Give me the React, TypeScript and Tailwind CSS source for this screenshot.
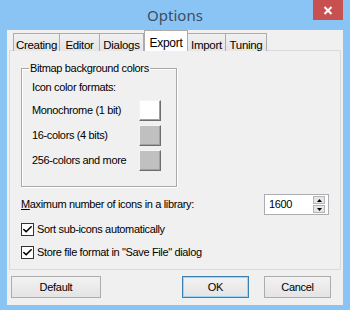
import { Check } from 'lucide-react';

const TABS = [
  { label: 'Creating', w: 'w-[47px]' },
  { label: 'Editor', w: 'w-[41px]' },
  { label: 'Dialogs', w: 'w-[45px]' },
  { label: 'Export', w: 'w-[44px]', active: true },
  { label: 'Import', w: 'w-[39px]' },
  { label: 'Tuning', w: 'w-[42px]' },
];

const FORMATS = [
  { label: 'Monochrome (1 bit)', color: 'bg-white' },
  { label: '16-colors (4 bits)', color: 'bg-[#c0c0c0]' },
  { label: '256-colors and more', color: 'bg-[#c0c0c0]' },
];

function Swatch({ color }: { color: string }) {
  // classic raised 3D colour button
  return (
    <div className={`w-[22px] h-[21px] border border-t-[#f4f4f4] border-l-[#f4f4f4] border-r-[#6d6d6d] border-b-[#6d6d6d] ${color}`}>
      <div className="w-full h-full border-r border-b border-r-[#a0a0a0] border-b-[#a0a0a0]" />
    </div>
  );
}

function CheckBox({ label }: { label: string }) {
  return (
    <div className="flex items-center h-[13px]">
      <div className="w-[13px] h-[13px] bg-white border border-[#333] flex items-center justify-center">
        <Check size={11} strokeWidth={3.5} className="text-black" />
      </div>
      <span className="ml-[3px]">{label}</span>
    </div>
  );
}

function DlgButton({ label, w, focused }: { label: string; w: string; focused?: boolean }) {
  return (
    <button
      className={`${w} h-[22px] border ${focused ? 'border-[#3c7fb1] shadow-[inset_0_0_0_1px_#9fd5f5]' : 'border-[#acacac]'} bg-gradient-to-b from-[#f2f2f2] to-[#e4e4e4] text-black text-[11px] tracking-[-0.3px]`}
    >
      {label}
    </button>
  );
}

export default function App() {
  return (
    <div
      className="w-[350px] h-[310px] bg-[#8ac4f5] flex flex-col text-[11px] tracking-[-0.35px] text-black"
      style={{ fontFamily: '"Liberation Sans", Arial, sans-serif' }}
    >
      {/* Title bar */}
      <div className="relative h-[30px] flex items-start justify-center">
        <span className="mt-[4px] text-[15px] tracking-normal text-[#3e4d5f]" style={{ fontFamily: '"Noto Sans", sans-serif' }}>
          Options
        </span>
        <div className="absolute top-0 right-[7px] w-[30px] h-[20px] bg-[#c75050] flex items-center justify-center">
          <svg width="10" height="9" viewBox="0 0 10 9">
            <path d="M1.5 1 L8.5 8 M8.5 1 L1.5 8" stroke="white" strokeWidth="2" />
          </svg>
        </div>
      </div>

      {/* Client area */}
      <div className="mx-[7px] h-[275px] bg-[#f0f0f0] flex flex-col px-[2px]">
        {/* Tab strip */}
        <div className="flex items-end h-[21px] pl-[4px] relative z-10">
          {TABS.map((t) =>
            t.active ? (
              <div
                key={t.label}
                className={`${t.w} h-[21px] bg-white border border-b-0 border-[#acacac] flex justify-center pt-[3px] text-[12px] tracking-[-0.3px]`}
              >
                {t.label}
              </div>
            ) : (
              <div
                key={t.label}
                className={`${t.w} h-[18px] bg-gradient-to-b from-[#f0f0f0] to-[#e5e5e5] border border-b-0 border-[#acacac] -ml-px first:ml-0 flex justify-center pt-[3px] text-[11.5px] tracking-[-0.3px]`}
              >
                {t.label}
              </div>
            ),
          )}
        </div>

        {/* Tab panel */}
        <div className="-mt-px h-[220px] border border-[#d9d9d9] bg-[#f0f0f0] flex flex-col pl-[11px] pr-[11px]">
          <fieldset className="mt-[11px] w-[156px] border border-[#a9a9a9] shadow-[inset_1px_1px_0_#fff,1px_1px_0_#fff] pl-[10px] pb-[15px]">
            <legend className="-ml-[3px] px-px leading-[13px]">Bitmap background colors</legend>
            <div className="mt-[6px] leading-[13px]">Icon color formats:</div>
            <div className="mt-[6px] flex flex-col gap-[4px]">
              {FORMATS.map((f) => (
                <div key={f.label} className="flex items-center h-[21px]">
                  <span className="w-[107px]">{f.label}</span>
                  <Swatch color={f.color} />
                </div>
              ))}
            </div>
          </fieldset>

          <div className="mt-[7px] flex items-center justify-between h-[21px]">
            <span>
              <span className="underline">M</span>aximum number of icons in a library:
            </span>
            <div className="w-[65px] h-[21px] bg-white border border-[#abadb3] flex items-center pl-[4px] pr-[3px]">
              <span className="flex-1">1600</span>
              <div className="w-[12px] h-[17px] flex flex-col gap-px">
                <div className="flex-1 bg-[#e6e6e6] border border-[#b5b5b5] flex items-center justify-center">
                  <svg width="5" height="3" viewBox="0 0 5 3">
                    <path d="M2.5 0 L5 3 L0 3 Z" fill="black" />
                  </svg>
                </div>
                <div className="flex-1 bg-[#e6e6e6] border border-[#b5b5b5] flex items-center justify-center">
                  <svg width="5" height="3" viewBox="0 0 5 3">
                    <path d="M0 0 L5 0 L2.5 3 Z" fill="black" />
                  </svg>
                </div>
              </div>
            </div>
          </div>

          <div className="mt-[8px] flex flex-col gap-[10px]">
            <CheckBox label="Sort sub-icons automatically" />
            <CheckBox label={'Store file format in "Save File" dialog'} />
          </div>
        </div>

        {/* Buttons */}
        <div className="mt-[6px] flex items-center pl-[2px] pr-[10px]">
          <DlgButton label="Default" w="w-[90px]" />
          <div className="flex-1" />
          <DlgButton label="OK" w="w-[67px]" focused />
          <div className="w-[15px]" />
          <DlgButton label="Cancel" w="w-[67px]" />
        </div>
      </div>
    </div>
  );
}
